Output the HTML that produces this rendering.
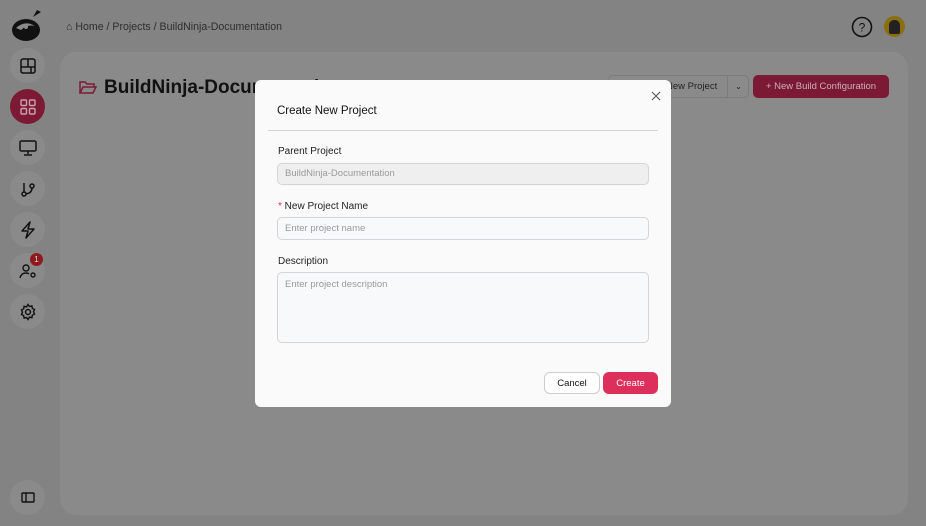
<!DOCTYPE html>
<html><head><style>
*{box-sizing:border-box;margin:0;padding:0}
body{width:926px;height:526px;background:#848384;font-family:"Liberation Sans",sans-serif;position:relative;overflow:hidden;color:#111}
.circ{position:absolute;left:10px;width:35px;height:35px;border-radius:50%;background:#8b8a8b;display:flex;align-items:center;justify-content:center}
.panel{position:absolute;left:60px;top:52px;width:848px;height:463px;background:#8a8a8a;border-radius:16px}
.modal{position:absolute;left:255px;top:80px;width:416px;height:327px;background:#fafafb;border-radius:6px}
.lbl{position:absolute;left:23px;font-size:10px;color:#222}
.inp{position:absolute;left:22px;width:372px;border:1px solid #d4d4d8;border-radius:5px;background:#f8f9fb;font-size:9.5px;color:#9a9a9a;padding-left:7px}
</style></head><body>
<svg style="position:absolute;left:11px;top:8px" width="32" height="34" viewBox="0 0 32 34"><path d="M26 2 L30 4 L22 9 Z" fill="#111"/><ellipse cx="15" cy="22" rx="14" ry="11" fill="#111"/><path d="M5 20 Q14 12 24 18 Q16 16 10 22Z" fill="#8a8a8a"/><circle cx="15" cy="19" r="2" fill="#8a8a8a"/></svg>
<div style="position:absolute;left:66px;top:21px;font-size:10.6px;color:#2e2e2e">⌂ Home / Projects / BuildNinja-Documentation</div>
<svg style="position:absolute;left:851px;top:16px" width="22" height="22" viewBox="0 0 22 22"><circle cx="11" cy="11" r="9.5" fill="none" stroke="#111" stroke-width="1.6"/><text x="11" y="15.5" font-size="12" text-anchor="middle" font-family="Liberation Sans" fill="#111">?</text></svg>
<div style="position:absolute;left:884px;top:16px;width:21px;height:21px;border-radius:50%;background:#8a6f10"><div style="margin:4px auto 0;width:11px;height:14px;border-radius:5px 5px 2px 2px;background:#222"></div></div>
<div class="circ" style="top:48px"><svg width="16" height="16" viewBox="0 0 16 16" fill="none" stroke="#111" stroke-width="1.5"><rect x="1" y="1" width="14" height="14" rx="2"/><path d="M1 9h14M8 1v8M11 9v6"/></svg></div>
<div class="circ" style="top:89px;background:#7c1a36"><svg width="16" height="16" viewBox="0 0 16 16" fill="none" stroke="#c9a0ab" stroke-width="1.4"><rect x="1" y="1" width="5.5" height="5.5" rx="1"/><rect x="9.5" y="1" width="5.5" height="5.5" rx="1"/><rect x="1" y="9.5" width="5.5" height="5.5" rx="1"/><rect x="9.5" y="9.5" width="5.5" height="5.5" rx="1"/></svg></div>
<div class="circ" style="top:130px"><svg width="18" height="16" viewBox="0 0 18 16" fill="none" stroke="#111" stroke-width="1.5"><rect x="1" y="1" width="16" height="10" rx="1.5"/><path d="M9 11v3M5 15h8"/></svg></div>
<div class="circ" style="top:171px"><svg width="16" height="16" viewBox="0 0 16 16" fill="none" stroke="#111" stroke-width="1.5"><circle cx="4" cy="13" r="2"/><circle cx="12" cy="5" r="2"/><path d="M4 2v9M12 7q0 5-6 6"/></svg></div>
<div class="circ" style="top:212px"><svg width="16" height="18" viewBox="0 0 16 18" fill="none" stroke="#111" stroke-width="1.5" stroke-linejoin="round"><path d="M10 1L2 10h6l-2 7 8-9H8z"/></svg></div>
<div class="circ" style="top:253px"><svg width="18" height="16" viewBox="0 0 18 16" fill="none" stroke="#111" stroke-width="1.4"><circle cx="7" cy="5" r="3"/><path d="M1 15q1-5 6-5q2 0 3 1"/><circle cx="14" cy="12" r="2"/></svg></div>
<div style="position:absolute;left:30px;top:253px;width:13px;height:13px;border-radius:50%;background:#8e1a1e;color:#ddd;font-size:8px;text-align:center;line-height:13px">1</div>
<div class="circ" style="top:294px"><svg width="18" height="18" viewBox="0 0 18 18" fill="none" stroke="#111" stroke-width="1.4"><circle cx="9" cy="9" r="2.5"/><path d="M9 1.5l1.5 2 2.4-.6.4 2.4 2.2 1.2-1 2.3 1 2.3-2.2 1.2-.4 2.4-2.4-.6L9 16.5l-1.5-2-2.4.6-.4-2.4L2.5 11.5l1-2.3-1-2.3 2.2-1.2.4-2.4 2.4.6z"/></svg></div>
<div class="circ" style="top:480px"><svg width="14" height="11" viewBox="0 0 14 11" fill="none" stroke="#111" stroke-width="1.4"><rect x="1" y="1" width="12" height="9" rx="1"/><path d="M5 1v9"/></svg></div>
<div class="panel"></div>
<svg style="position:absolute;left:79px;top:80px" width="18" height="15" viewBox="0 0 18 15" fill="none" stroke="#7c1a36" stroke-width="1.5"><path d="M1 13V2h5l2 2h7v3M1 13l3-6h13l-3 6z"/></svg>
<div style="position:absolute;left:104px;top:77px;font-size:19px;font-weight:bold;color:#111">BuildNinja-Documentation</div>
<div style="position:absolute;left:608px;top:75px;width:141px;height:23px;border:1px solid #7c7c7c;border-radius:5px;font-size:9.5px;color:#222;line-height:21px;padding-left:57px">New Project<span style="position:absolute;left:118px;top:0;height:21px;border-left:1px solid #7c7c7c;width:22px;text-align:center;font-size:8px">⌄</span></div>
<div style="position:absolute;left:753px;top:75px;width:136px;height:23px;background:#7c1a36;border-radius:5px;color:#c9b0b7;font-size:9.5px;line-height:23px;text-align:center">+ New Build Configuration</div>
<div class="modal">
<div style="position:absolute;left:22px;top:25px;font-size:11.5px;color:#111">Create New Project</div>
<svg style="position:absolute;left:396px;top:11px" width="10" height="10" viewBox="0 0 10 10" stroke="#555" stroke-width="1.1"><path d="M1 1L9 9M9 1L1 9"/></svg>
<div style="position:absolute;left:13px;right:13px;top:50px;border-top:1px solid #d4d4d4"></div>
<div class="lbl" style="top:66px">Parent Project</div>
<div class="inp" style="top:83px;height:22px;line-height:20px;background:#efefef">BuildNinja-Documentation</div>
<div class="lbl" style="top:121px"><span style="color:#e0305a">*</span> New Project Name</div>
<div class="inp" style="top:137px;height:23px;line-height:22px">Enter project name</div>
<div class="lbl" style="top:176px">Description</div>
<div class="inp" style="top:192px;height:71px;padding-top:6px">Enter project description</div>
<div style="position:absolute;left:289px;top:292px;width:56px;height:22px;border:1px solid #ccc;border-radius:6px;background:#fff;font-size:9.5px;text-align:center;line-height:22px">Cancel</div>
<div style="position:absolute;left:348px;top:292px;width:55px;height:22px;border-radius:6px;background:#dc2f5b;color:#fff;font-size:9.5px;text-align:center;line-height:23px">Create</div>
</div>
</body></html>
